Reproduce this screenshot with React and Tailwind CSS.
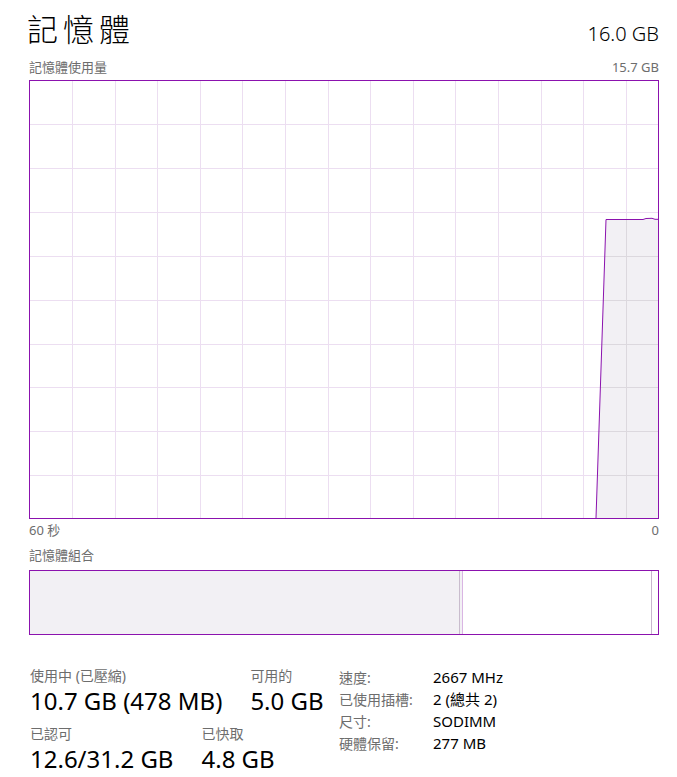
const FONT = "font-['Noto_Sans','Noto_Sans_CJK_TC',sans-serif]"

const W = 628
const H = 437
const VX = Array.from({ length: 14 }, (_, i) => 42 + i * 42.6)
const HY = Array.from({ length: 9 }, (_, i) => 43 + i * 43.9)
const AREA = '566,437 576,138.5 613,138.5 616,137.5 622,137.3 625,138.3 628,138.3 628,437'

function GridLines({ color }) {
    return (
        <g stroke={color} strokeWidth="1">
            {VX.map(x => <line key={'v' + x} x1={Math.round(x) + 0.5} y1="0" x2={Math.round(x) + 0.5} y2={H} />)}
            {HY.map(y => <line key={'h' + y} x1="0" y1={Math.round(y) + 0.5} x2={W} y2={Math.round(y) + 0.5} />)}
        </g>
    )
}

function UsageChart() {
    return (
        <div className="h-[439px] border border-[#8b12ae]">
            <svg width={W} height={H} className="block">
                <defs>
                    <clipPath id="area">
                        <polygon points={AREA} />
                    </clipPath>
                </defs>
                <GridLines color="#ecdef1" />
                <polygon points={AREA} fill="#f2f0f4" />
                <g clipPath="url(#area)">
                    <GridLines color="#dcd8de" />
                </g>
                <polyline points="566,437 576,138.5 613,138.5 616,137.5 622,137.3 625,138.3 628,138.3"
                    fill="none" stroke="#8b12ae" strokeWidth="1" />
            </svg>
        </div>
    )
}

function Stat({ label, value }) {
    return (
        <div className="flex flex-col">
            <div className="text-[14px] leading-[20px] text-[#6d6d6d]">{label}</div>
            <div className="text-[24px] leading-[30px] text-black">{value}</div>
        </div>
    )
}

const SPECS = [
    ['速度:', '2667 MHz'],
    ['已使用插槽:', '2 (總共 2)'],
    ['尺寸:', 'SODIMM'],
    ['硬體保留:', '277 MB'],
]

export default function App() {
    return (
        <div className={`w-[677px] h-[777px] bg-white pl-[29px] pr-[18px] overflow-hidden ${FONT}`}>

            {/* 標題 */}
            <div className="flex items-baseline justify-between h-[54px] pt-[8px]">
                <h1 className="text-[31px] leading-[40px] tracking-[5px] -ml-[2px] font-['Noto_Sans_CJK_TC',sans-serif] font-light text-black">記憶體</h1>
                <span className="text-[20px] leading-[28px] mt-[2px] font-light text-black">16.0 GB</span>
            </div>

            <div className="flex items-end justify-between h-[26px] pb-[4px] text-[13px] leading-[18px] text-[#6d6d6d]">
                <span>記憶體使用量</span>
                <span>15.7 GB</span>
            </div>

            <UsageChart />

            <div className="flex justify-between h-[22px] pt-[2px] text-[13px] leading-[18px] text-[#6d6d6d]">
                <span>60 秒</span>
                <span>0</span>
            </div>

            <div className="h-[29px] pt-[5px] text-[13px] leading-[18px] text-[#6d6d6d]">記憶體組合</div>

            {/* 組合 */}
            <div className="h-[65px] border border-[#8b12ae] flex">
                <div className="w-[429px] bg-[#f2f0f4]"></div>
                <div className="w-px bg-[#c9bccd]"></div>
                <div className="w-[2px] bg-[#f2f0f4]"></div>
                <div className="w-px bg-[#d9b5e3]"></div>
                <div className="flex-1 bg-white"></div>
                <div className="w-px bg-[#c8b5cf]"></div>
                <div className="w-[6px] bg-white"></div>
            </div>

            {/* 統計 */}
            <div className="flex mt-[31px]">
                <div className="w-[310px] pl-[1px] flex flex-col gap-[8px]">
                    <div className="flex gap-[28px]">
                        <Stat label="使用中 (已壓縮)" value="10.7 GB (478 MB)" />
                        <Stat label="可用的" value="5.0 GB" />
                    </div>
                    <div className="flex gap-[28px]">
                        <Stat label="已認可" value="12.6/31.2 GB" />
                        <Stat label="已快取" value="4.8 GB" />
                    </div>
                </div>
                <div className="grid grid-cols-[94px_auto] auto-rows-[22px] items-center">
                    {SPECS.map(([k, v]) => (
                        <div key={k} className="contents">
                            <span className="text-[14px] text-[#6d6d6d]">{k}</span>
                            <span className="text-[15px] text-black">{v}</span>
                        </div>
                    ))}
                </div>
            </div>
        </div>
    )
}
